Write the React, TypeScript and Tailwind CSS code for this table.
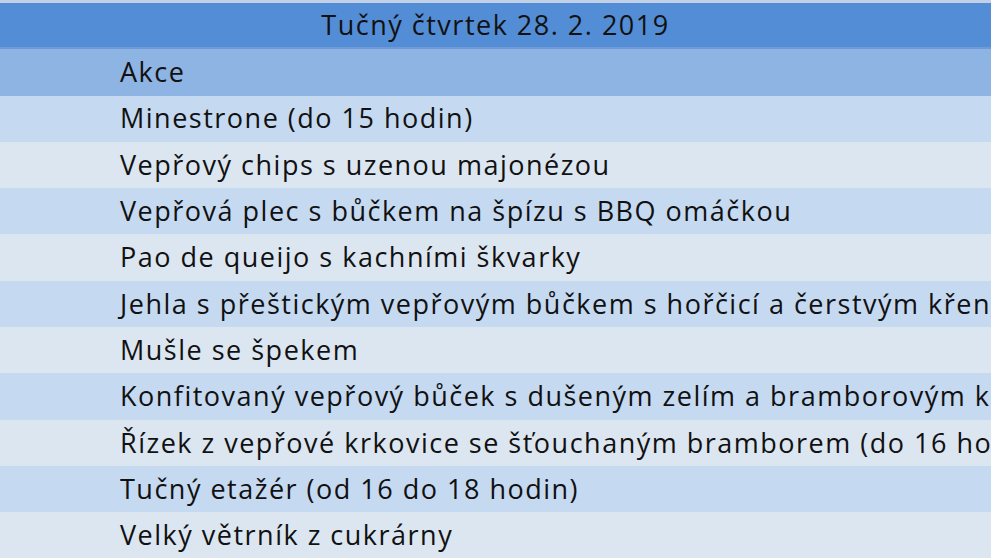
const items = [
  "Minestrone (do 15 hodin)",
  "Vepřový chips s uzenou majonézou",
  "Vepřová plec s bůčkem na špízu s BBQ omáčkou",
  "Pao de queijo s kachními škvarky",
  "Jehla s přeštickým vepřovým bůčkem s hořčicí a čerstvým křenem",
  "Mušle se špekem",
  "Konfitovaný vepřový bůček s dušeným zelím a bramborovým knedlíkem",
  "Řízek z vepřové krkovice se šťouchaným bramborem (do 16 hodin)",
  "Tučný etažér (od 16 do 18 hodin)",
  "Velký větrník z cukrárny",
];

export default function App() {
  return (
    <div
      className="h-[558px] w-[991px] overflow-hidden bg-[#dce6f1] text-[27px] tracking-[1.5px] text-[#111] whitespace-nowrap"
      style={{ fontFamily: "'Open Sans', sans-serif" }}
    >
      <div className="h-[3px] bg-[#c3d1e8]" />
      <div className="flex h-[46.3px] items-center justify-center border-b-2 border-[#6f9ad6] bg-[#538dd5]">
        Tučný čtvrtek 28. 2. 2019
      </div>
      <div className="flex h-[46.3px] items-center bg-[#8db4e2] pl-[120px]">Akce</div>
      {items.map((t, i) => (
        <div
          key={t}
          className={
            "flex h-[46.3px] items-center pl-[120px] " +
            (i % 2 === 0 ? "bg-[#c5d9f1]" : "bg-[#dce6f1]")
          }
        >
          {t}
        </div>
      ))}
      <div className="h-[3px] bg-[#538dd5]" />
    </div>
  );
}
